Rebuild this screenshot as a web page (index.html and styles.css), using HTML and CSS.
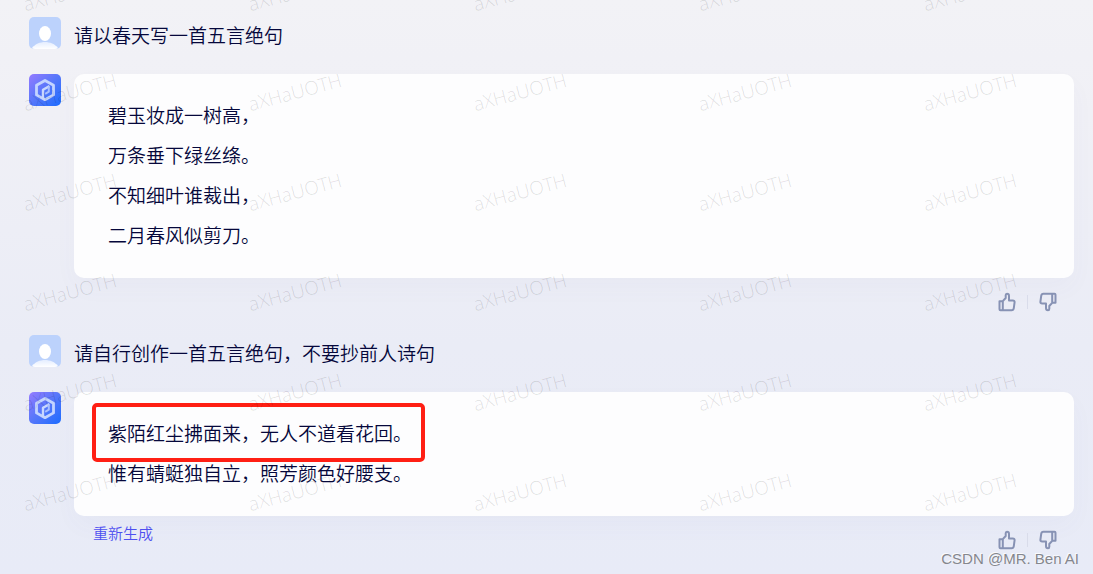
FILE: index.html
```html
<!DOCTYPE html>
<html lang="zh-CN">
<head>
    <meta charset="UTF-8">
    <meta name="viewport" content="width=device-width, initial-scale=1.0">
    <title>对话</title>
    <link rel="stylesheet" href="styles.css">
</head>
<body>
    <!-- shared icons -->
    <svg class="defs" aria-hidden="true">
        <defs>
            <linearGradient id="shoulders" x1="0" y1="0" x2="0" y2="1">
                <stop offset="0" stop-color="#e4edff"/>
                <stop offset="1" stop-color="#ffffff"/>
            </linearGradient>
            <linearGradient id="botBg" x1="0" y1="0" x2="1" y2="1">
                <stop offset="0" stop-color="#957bff"/>
                <stop offset="0.5" stop-color="#5577fa"/>
                <stop offset="1" stop-color="#1c6cff"/>
            </linearGradient>
        </defs>
        <symbol id="user" viewBox="0 0 32 32">
            <rect width="32" height="32" rx="5" fill="#bcd2fc"/>
            <path d="M3 31C6 27 11 25 16 25s10 2 13 6q-1 1-3 1H6q-2 0-3-1z" fill="url(#shoulders)"/>
            <ellipse cx="16" cy="16.500" rx="6" ry="7.500" fill="#fff"/>
        </symbol>
        <symbol id="bot" viewBox="0 0 32 32">
            <rect width="32" height="32" rx="5" fill="url(#botBg)"/>
            <path d="M16 6.500l8.500 4.800v9.600L16 25.700l-8.500-4.800v-9.600z" fill="none" stroke="#c3d4ff" stroke-width="2.800" stroke-linejoin="round"/>
            <path d="M14 25v-9.200l6.500-3.700" fill="none" stroke="#c9d8ff" stroke-width="2.400" stroke-linejoin="round"/>
            <path d="M19.800 12.500v5.200l-3.600 2.100" fill="none" stroke="#a9c0ff" stroke-width="2" stroke-linejoin="round"/>
        </symbol>
        <symbol id="thumb" viewBox="0 0 20 20">
            <path d="M2.500 9.200h3.300L8.700 6V3.200q0-1.500 1.300-1.500Q12 1.700 12 4v4.500h3.800q2 0 1.800 1.700l-.8 6q-.3 2.100-2.200 2.100H3.500q-1 0-1-1zM5.800 9.200v9" fill="none" stroke="#8792b4" stroke-width="2" stroke-linejoin="round" stroke-linecap="round"/>
        </symbol>
    </svg>

    <main class="chat">
        <div class="message question">
            <svg class="avatar" role="img" aria-label="用户"><use href="#user"/></svg>
            <p class="question-text">请以春天写一首五言绝句</p>
        </div>
        <div class="message">
            <svg class="avatar" role="img" aria-label="助手"><use href="#bot"/></svg>
            <div class="answer">
                <div class="card">
                    <p>碧玉妆成一树高，</p>
                    <p>万条垂下绿丝绦。</p>
                    <p>不知细叶谁裁出，</p>
                    <p>二月春风似剪刀。</p>
                </div>
                <div class="answer-footer">
                    <div class="feedback">
                        <button type="button" aria-label="赞"><svg><use href="#thumb"/></svg></button>
                        <span class="divider"></span>
                        <button type="button" class="down" aria-label="踩"><svg><use href="#thumb"/></svg></button>
                    </div>
                </div>
            </div>
        </div>

        <div class="message question">
            <svg class="avatar" role="img" aria-label="用户"><use href="#user"/></svg>
            <p class="question-text">请自行创作一首五言绝句，不要抄前人诗句</p>
        </div>
        <div class="message">
            <svg class="avatar" role="img" aria-label="助手"><use href="#bot"/></svg>
            <div class="answer">
                <div class="card">
                    <p class="marked">紫陌红尘拂面来，无人不道看花回。</p>
                    <p>惟有蜻蜓独自立，照芳颜色好腰支。</p>
                </div>
                <div class="answer-footer">
                    <a class="regenerate" href="#">重新生成</a>
                    <div class="feedback">
                        <button type="button" aria-label="赞"><svg><use href="#thumb"/></svg></button>
                        <span class="divider"></span>
                        <button type="button" class="down" aria-label="踩"><svg><use href="#thumb"/></svg></button>
                    </div>
                </div>
            </div>
        </div>
    </main>

    <div class="watermark" aria-hidden="true">
        <span>aXHaUOTH</span><span>aXHaUOTH</span><span>aXHaUOTH</span><span>aXHaUOTH</span><span>aXHaUOTH</span>
        <span>aXHaUOTH</span><span>aXHaUOTH</span><span>aXHaUOTH</span><span>aXHaUOTH</span><span>aXHaUOTH</span>
        <span>aXHaUOTH</span><span>aXHaUOTH</span><span>aXHaUOTH</span><span>aXHaUOTH</span><span>aXHaUOTH</span>
        <span>aXHaUOTH</span><span>aXHaUOTH</span><span>aXHaUOTH</span><span>aXHaUOTH</span><span>aXHaUOTH</span>
        <span>aXHaUOTH</span><span>aXHaUOTH</span><span>aXHaUOTH</span><span>aXHaUOTH</span><span>aXHaUOTH</span>
        <span>aXHaUOTH</span><span>aXHaUOTH</span><span>aXHaUOTH</span><span>aXHaUOTH</span><span>aXHaUOTH</span>
    </div>
    <div class="credit">CSDN @MR. Ben AI</div>
</body>
</html>
```

FILE: styles.css
```css
* {
    box-sizing: border-box;
}
body {
    position: relative;
    margin: 0;
    min-height: 100vh;
    overflow: hidden;
    font-family: "Noto Sans CJK SC", sans-serif;
    font-weight: 350;
    font-size: 19px;
    color: #05073b;
    background: linear-gradient(180deg, #f2f2f6 0%, #f0f0f6 20%, #eaecf6 60%, #e8ebf7 100%);
}
p {
    margin: 0;
}
.defs {
    position: absolute;
    width: 0;
    height: 0;
}
.chat {
    padding: 17px 19px 0 29px;
}
.message {
    display: flex;
    align-items: flex-start;
    gap: 13px;
}
.question {
    margin-bottom: 25px;
}
.avatar {
    flex: none;
    width: 32px;
    height: 32px;
}
.question-text {
    padding-top: 4px;
    line-height: 28px;
}
.answer {
    flex: 1;
    min-width: 0;
}
.card {
    padding: 21px 34px 23px;
    border-radius: 10px;
    background: #fdfdfe;
    box-shadow: 0 10px 24px rgba(90, 100, 170, 0.03);
    line-height: 40px;
}
/* red frame drawn round a line */
.marked {
    position: relative;
    width: fit-content;
}
.marked::after {
    content: "";
    position: absolute;
    inset: -10px -13px -9px -16px;
    border: 4px solid #ff1f14;
    border-radius: 5px;
}
.answer-footer {
    display: flex;
    align-items: flex-start;
    height: 57px;
    padding: 0 16px 0 19px;
}
.regenerate {
    font-size: 15px;
    line-height: 34px;
    color: #4e4ff0;
    text-decoration: none;
}
.feedback {
    display: flex;
    align-items: center;
    gap: 10px;
    margin-left: auto;
    padding-top: 14px;
}
.feedback button {
    width: 20px;
    height: 20px;
    padding: 0;
    border: none;
    background: none;
    cursor: pointer;
}
.feedback svg {
    display: block;
    width: 20px;
    height: 20px;
}
.feedback .down {
    transform: rotate(180deg);
}
.divider {
    width: 1px;
    height: 14px;
    background: #d9dcea;
}
/* repeated text over the whole page */
.watermark {
    position: absolute;
    top: -58px;
    left: 22px;
    right: 0;
    display: grid;
    grid-template-columns: repeat(4, 225px) 1fr;
    grid-auto-rows: 100px;
    align-items: center;
    pointer-events: none;
    font-family: "Open Sans", "Noto Sans", sans-serif;
    font-weight: 300;
    font-size: 19px;
    color: rgba(0, 0, 0, 0.12);
}
.watermark span {
    justify-self: start;
    transform: rotate(-15deg);
}
.credit {
    position: absolute;
    right: 14px;
    bottom: 4px;
    font-family: "Liberation Sans", Arial, sans-serif;
    font-weight: 400;
    font-size: 15px;
    line-height: 22px;
    color: #85878d;
    text-shadow: -1px -1px 0 rgba(255, 255, 255, 0.8);
}
```
